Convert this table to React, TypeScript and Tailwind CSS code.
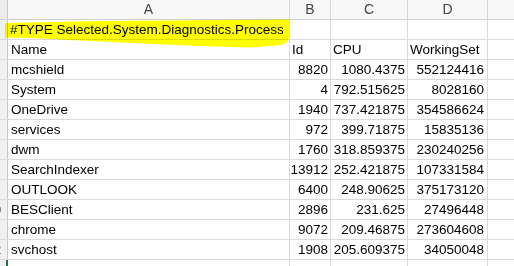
import React from 'react';

type Row = [string, string, string, string];

const rows: Row[] = [
  ['mcshield', '8820', '1080.4375', '552124416'],
  ['System', '4', '792.515625', '8028160'],
  ['OneDrive', '1940', '737.421875', '354586624'],
  ['services', '972', '399.71875', '15835136'],
  ['dwm', '1760', '318.859375', '230240256'],
  ['SearchIndexer', '13912', '252.421875', '107331584'],
  ['OUTLOOK', '6400', '248.90625', '375173120'],
  ['BESClient', '2896', '231.625', '27496448'],
  ['chrome', '9072', '209.46875', '273604608'],
  ['svchost', '1908', '205.609375', '34050048'],
];

const cell = 'h-full border-r border-[#dadada] overflow-hidden whitespace-nowrap';

const RowHead: React.FC<{ n: number; selected?: boolean }> = ({ n, selected }) => (
  <div
    className={
      'w-[8px] h-full shrink-0 overflow-hidden bg-[#f0f0f0] ' +
      (selected ? 'border-r-2 border-[#217346]' : 'border-r border-[#c8c8c8]')
    }
  >
    <div className="w-[26px] -ml-[19px] text-center text-[13px] text-[#444]">{n}</div>
  </div>
);

const App: React.FC = () => {
  return (
    <div
      className="relative w-[514px] h-[266px] overflow-hidden bg-white text-black text-[13.5px] leading-[19px]"
      style={{ fontFamily: '"Liberation Sans", Arial, sans-serif' }}
    >
      {/* column headers */}
      <div className="flex h-[20px] bg-[#f8f8f8] border-b border-[#cfcfcf] text-[#444] text-[14px]">
        <div className="w-[8px] h-full shrink-0 bg-[#ececec] border-r border-[#c8c8c8]" />
        {['A', 'B', 'C', 'D'].map((c, i) => (
          <div
            key={c}
            className={
              'h-full shrink-0 border-r border-[#d8d8d8] text-center ' +
              ['w-[282px]', 'w-[41px]', 'w-[77px]', 'w-[80px]'][i]
            }
          >
            {c}
          </div>
        ))}
        <div className="flex-1" />
      </div>

      {/* row 1 */}
      <div className="flex h-[20px] border-b border-[#dadada]">
        <RowHead n={1} />
        <div className={cell + ' w-[282px] shrink-0 pl-[2px] overflow-visible'}>#TYPE Selected.System.Diagnostics.Process</div>
        <div className={cell + ' w-[41px] shrink-0'} />
        <div className={cell + ' w-[77px] shrink-0'} />
        <div className={cell + ' w-[80px] shrink-0'} />
        <div className="flex-1" />
      </div>

      {/* row 2 */}
      <div className="flex h-[20px] border-b border-[#dadada]">
        <RowHead n={2} />
        <div className={cell + ' w-[282px] shrink-0 pl-[3px]'}>Name</div>
        <div className={cell + ' w-[41px] shrink-0 pl-[2px]'}>Id</div>
        <div className={cell + ' w-[77px] shrink-0 pl-[2px]'}>CPU</div>
        <div className={cell + ' w-[80px] shrink-0 pl-[2px]'}>WorkingSet</div>
        <div className="flex-1" />
      </div>

      {rows.map((r, i) => (
        <div key={r[0]} className="flex h-[20px] border-b border-[#dadada]">
          <RowHead n={i + 3} />
          <div className={cell + ' w-[282px] shrink-0 pl-[3px]'}>{r[0]}</div>
          <div className={cell + ' w-[41px] shrink-0 pr-[2px] text-right'}>{r[1]}</div>
          <div className={cell + ' w-[77px] shrink-0 pr-[2px] text-right'}>{r[2]}</div>
          <div className={cell + ' w-[80px] shrink-0 pr-[3px] text-right'}>{r[3]}</div>
          <div className="flex-1" />
        </div>
      ))}

      <div className="flex h-[20px]">
        <RowHead n={13} selected />
        <div className={cell + ' w-[282px] shrink-0'} />
        <div className={cell + ' w-[41px] shrink-0'} />
        <div className={cell + ' w-[77px] shrink-0'} />
        <div className={cell + ' w-[80px] shrink-0'} />
        <div className="flex-1" />
      </div>

      {/* highlighter stroke over row 1 */}
      <svg className="absolute left-0 top-0 pointer-events-none mix-blend-multiply" width="514" height="60">
        <path
          d="M5,23 L100,21 L289,19.5 L289,38 Q288,43 281,45 L250,47.5 L200,46 L100,41.5 L30,38 L5,37.5 Z"
          fill="#ffff00"
        />
      </svg>
    </div>
  );
};

export default App;
